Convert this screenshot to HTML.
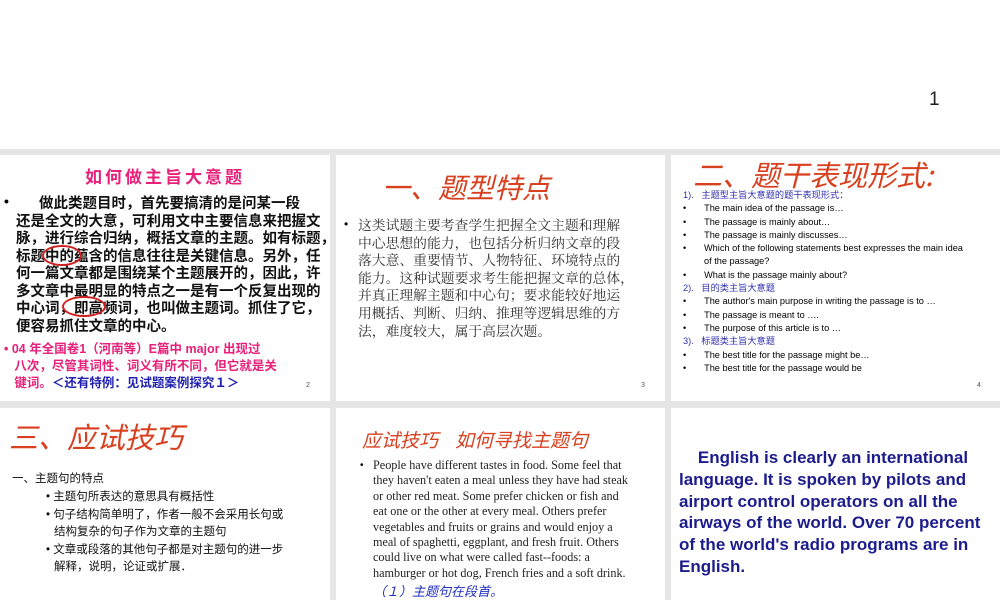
<!DOCTYPE html>
<html><head><meta charset="utf-8"><style>
*{margin:0;padding:0}
body{width:1000px;height:600px;overflow:hidden;background:#fff;position:relative;font-family:"Liberation Sans","Noto Sans CJK SC",sans-serif}
.g{position:absolute;left:0;top:149px;width:1000px;height:451px;background:#e6e6e6}
.s{position:absolute;background:#fff;overflow:hidden}
.a{position:absolute;white-space:nowrap}
.pn{position:absolute;font-size:7px;color:#555}
</style></head><body>
<div class="a" style="left:929px;top:89px;font-size:19px;color:#222">1</div>
<div class="g"></div>

<div class="s" style="left:0;top:155px;width:330px;height:246px">
<div class="a" style="left:85px;top:8px;font-size:17px;font-weight:bold;color:#e8207a;font-family:'Noto Sans CJK SC',sans-serif;letter-spacing:3px">如何做主旨大意题</div>
<div class="a" style="left:4px;top:38px;font-size:14px;font-weight:bold">•</div>
<div style="position:absolute;left:16px;top:39px;width:320px;font-size:14.5px;line-height:17.5px;font-weight:bold;font-family:'Noto Sans CJK SC',sans-serif;color:#111">
<div style="white-space:nowrap">&nbsp;&nbsp;&nbsp;&nbsp;&nbsp;&nbsp;&nbsp;做此类题目时，首先要搞清的是问某一段</div>
<div style="white-space:nowrap">还是全文的大意，可利用文中主要信息来把握文</div>
<div style="white-space:nowrap">脉，进行综合归纳，概括文章的主题。如有标题，</div>
<div style="white-space:nowrap">标题中的蕴含的信息往往是关键信息。另外，任</div>
<div style="white-space:nowrap">何一篇文章都是围绕某个主题展开的，因此，许</div>
<div style="white-space:nowrap">多文章中最明显的特点之一是有一个反复出现的</div>
<div style="white-space:nowrap">中心词，即高频词，也叫做主题词。抓住了它，</div>
<div style="white-space:nowrap">便容易抓住文章的中心。</div></div>
<div style="position:absolute;left:42px;top:90px;width:36px;height:17px;border:2px solid #d02020;border-radius:50%"></div>
<div style="position:absolute;left:62px;top:141px;width:40px;height:17px;border:2px solid #d02020;border-radius:50%"></div>
<div style="position:absolute;left:4px;top:186px;font-size:12.5px;line-height:17px;color:#e8207a;font-weight:bold;white-space:nowrap">
<div>• 04 年全国卷1（河南等）E篇中 major 出现过</div>
<div>&nbsp;&nbsp;&nbsp;八次，尽管其词性、词义有所不同，但它就是关</div>
<div>&nbsp;&nbsp;&nbsp;键词。<span style="color:#2020b0">＜还有特例：见试题案例探究１＞</span></div></div>
<div class="pn" style="left:306px;top:227px">2</div>
</div>

<div class="s" style="left:336px;top:155px;width:329px;height:246px">
<div class="a" style="left:46px;top:12px;font-size:28px;color:#d84020;font-style:italic;font-family:'Noto Sans CJK SC',sans-serif">一、题型特点</div>
<div class="a" style="left:8px;top:62px;font-size:12px">•</div>
<div style="position:absolute;left:22px;top:61px;font-size:13.8px;line-height:17.6px;color:#333;font-family:'Noto Serif CJK SC',serif;white-space:nowrap">
<div>这类试题主要考查学生把握全文主题和理解</div>
<div>中心思想的能力，也包括分析归纳文章的段</div>
<div>落大意、重要情节、人物特征、环境特点的</div>
<div>能力。这种试题要求考生能把握文章的总体，</div>
<div>并真正理解主题和中心句；要求能较好地运</div>
<div>用概括、判断、归纳、推理等逻辑思维的方</div>
<div>法，难度较大，属于高层次题。</div></div>
<div class="pn" style="left:305px;top:227px">3</div>
</div>

<div class="s" style="left:671px;top:155px;width:329px;height:246px">
<div class="a" style="left:22px;top:-2px;font-size:29px;color:#d84020;font-style:italic;font-family:'Noto Sans CJK SC',sans-serif">二、题干表现形式:</div>
<div style="position:absolute;left:12px;top:34px;font-size:9.2px;line-height:13.3px;color:#000;width:300px">
<div style="color:#3030b0">1).&nbsp;&nbsp;&nbsp;主题型主旨大意题的题干表现形式：</div>
<div>•&nbsp;&nbsp;&nbsp;&nbsp;&nbsp;&nbsp;&nbsp;The main idea of the passage is…</div>
<div>•&nbsp;&nbsp;&nbsp;&nbsp;&nbsp;&nbsp;&nbsp;The passage is mainly about…</div>
<div>•&nbsp;&nbsp;&nbsp;&nbsp;&nbsp;&nbsp;&nbsp;The passage is mainly discusses…</div>
<div style="display:flex"><span style="width:21px;flex:none">•</span><span>Which of the following statements best expresses the main idea<br>of the passage?</span></div>
<div>•&nbsp;&nbsp;&nbsp;&nbsp;&nbsp;&nbsp;&nbsp;What is the passage mainly about?</div>
<div style="color:#3030b0">2).&nbsp;&nbsp;&nbsp;目的类主旨大意题</div>
<div>•&nbsp;&nbsp;&nbsp;&nbsp;&nbsp;&nbsp;&nbsp;The author's main purpose in writing the passage is to …</div>
<div>•&nbsp;&nbsp;&nbsp;&nbsp;&nbsp;&nbsp;&nbsp;The passage is meant to ….</div>
<div>•&nbsp;&nbsp;&nbsp;&nbsp;&nbsp;&nbsp;&nbsp;The purpose of this article is to …</div>
<div style="color:#3030b0">3).&nbsp;&nbsp;&nbsp;标题类主旨大意题</div>
<div>•&nbsp;&nbsp;&nbsp;&nbsp;&nbsp;&nbsp;&nbsp;The best title for the passage might be…</div>
<div>•&nbsp;&nbsp;&nbsp;&nbsp;&nbsp;&nbsp;&nbsp;The best title for the passage would be</div></div>
<div class="pn" style="left:306px;top:227px">4</div>
</div>

<div class="s" style="left:0;top:408px;width:330px;height:192px">
<div class="a" style="left:9px;top:7px;font-size:29px;color:#d84020;font-style:italic;font-family:'Noto Sans CJK SC',sans-serif">三、应试技巧</div>
<div style="position:absolute;left:12px;top:63px;font-size:11.5px;line-height:17px;color:#111;white-space:nowrap">
<div>一、主题句的特点</div>
<div style="padding-left:34px;margin-top:1px">• 主题句所表达的意思具有概括性</div>
<div style="padding-left:34px;margin-top:1px">• 句子结构简单明了，作者一般不会采用长句或</div>
<div style="padding-left:42px">结构复杂的句子作为文章的主题句</div>
<div style="padding-left:34px;margin-top:1px">• 文章或段落的其他句子都是对主题句的进一步</div>
<div style="padding-left:42px">解释，说明，论证或扩展．</div></div>
</div>

<div class="s" style="left:336px;top:408px;width:329px;height:192px">
<div class="a" style="left:26px;top:18px;font-size:19px;color:#d84020;font-style:italic;font-family:'Noto Sans CJK SC',sans-serif">应试技巧&nbsp;&nbsp;&nbsp;&nbsp;如何寻找主题句</div>
<div class="a" style="left:24px;top:52px;font-size:10px">•</div>
<div style="position:absolute;left:37px;top:50px;width:290px;font-size:12.2px;line-height:15.4px;color:#222;font-family:'Liberation Serif',serif;white-space:nowrap">
<div>People have different tastes in food. Some feel that</div>
<div>they haven't eaten a meal unless they have had steak</div>
<div>or other red meat. Some prefer chicken or fish and</div>
<div>eat one or the other at every meal. Others prefer</div>
<div>vegetables and fruits or grains and would enjoy a</div>
<div>meal of spaghetti, eggplant, and fresh fruit. Others</div>
<div>could live on what were called fast--foods: a</div>
<div>hamburger or hot dog, French fries and a soft drink.</div>
<div style="color:#2030c0;font-style:italic;font-size:13px;margin-top:2px;font-family:'Noto Sans CJK SC',sans-serif">（１）主题句在段首。</div></div>
</div>

<div class="s" style="left:671px;top:408px;width:329px;height:192px">
<div style="position:absolute;left:8px;top:39px;width:320px;font-size:17px;line-height:21.8px;color:#1c1c8c;font-weight:bold;white-space:nowrap">
<div>&nbsp;&nbsp;&nbsp;&nbsp;English is clearly an international</div>
<div>language. It is spoken by pilots and</div>
<div>airport control operators on all the</div>
<div>airways of the world. Over 70 percent</div>
<div>of the world's radio programs are in</div>
<div>English.</div></div>
</div>
</body></html>
